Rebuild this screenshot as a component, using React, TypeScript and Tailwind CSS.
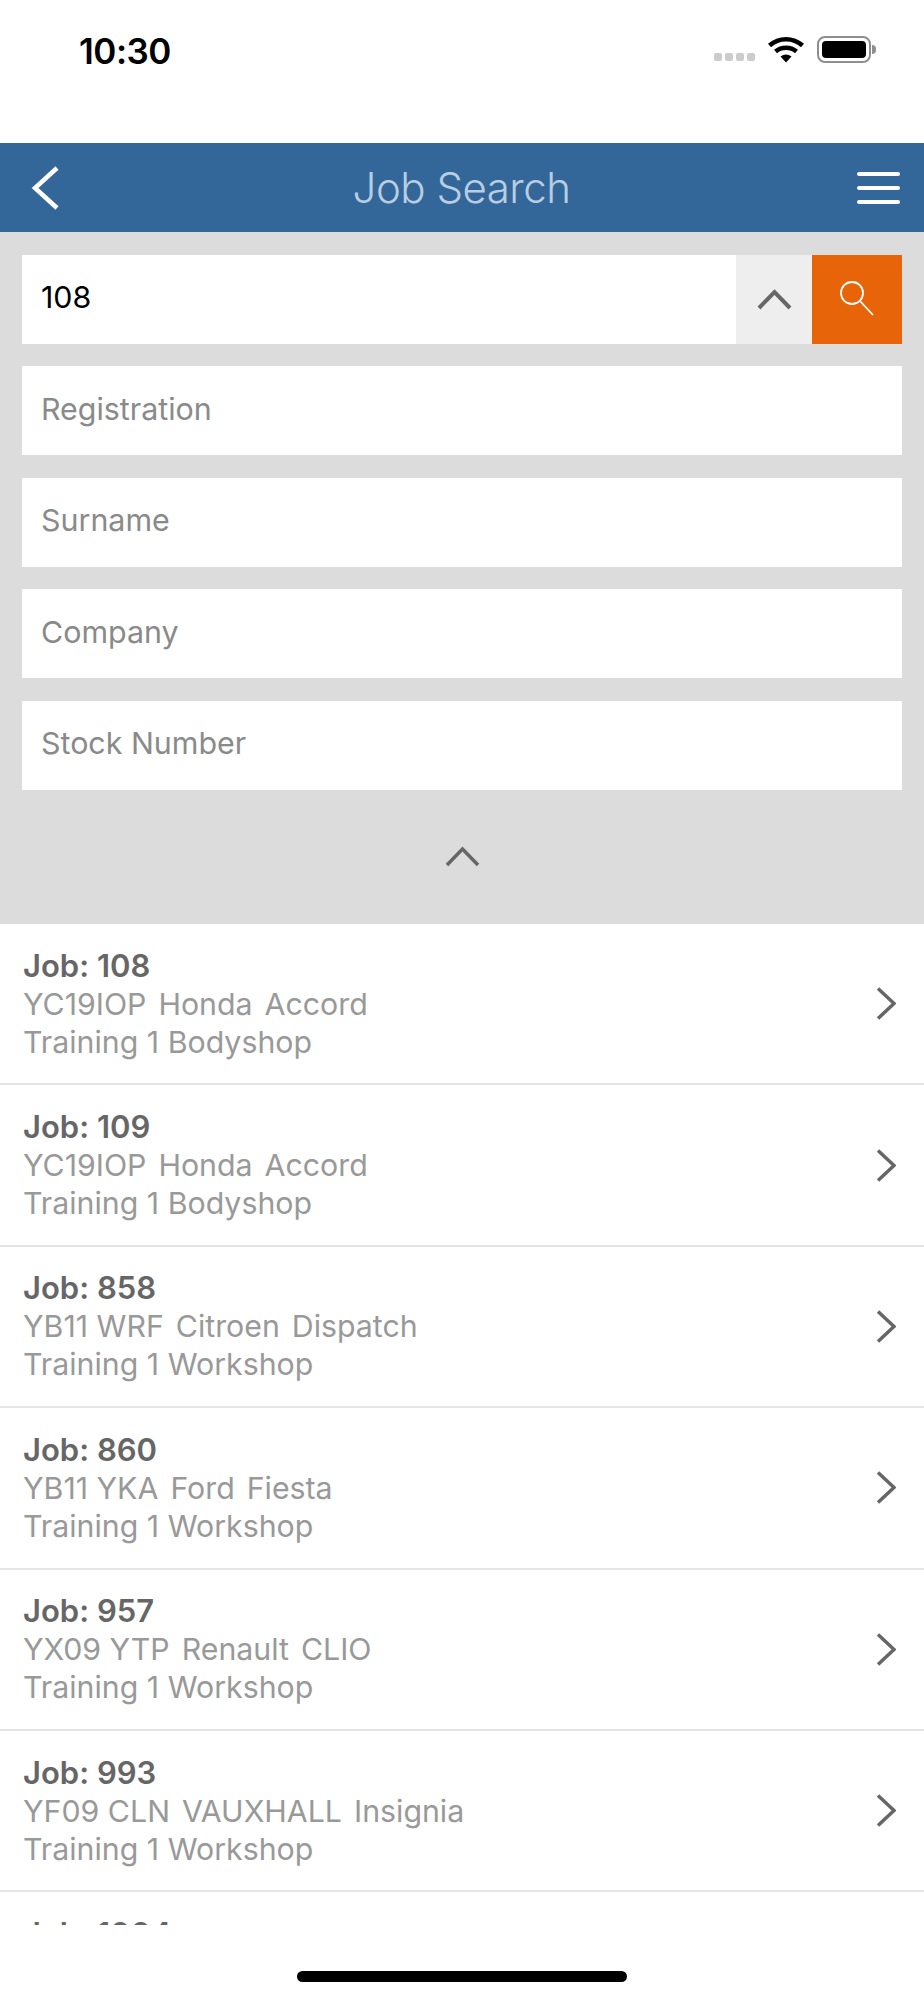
import React from "react";

const FONT = "font-['Inter','Noto_Sans',sans-serif]";

const JOBS = [
  { id: "108", vehicle: ["YC19IOP", "Honda", "Accord"], site: "Training 1 Bodyshop" },
  { id: "109", vehicle: ["YC19IOP", "Honda", "Accord"], site: "Training 1 Bodyshop" },
  { id: "858", vehicle: ["YB11 WRF", "Citroen", "Dispatch"], site: "Training 1 Workshop" },
  { id: "860", vehicle: ["YB11 YKA", "Ford", "Fiesta"], site: "Training 1 Workshop" },
  { id: "957", vehicle: ["YX09 YTP", "Renault", "CLIO"], site: "Training 1 Workshop" },
  { id: "993", vehicle: ["YF09 CLN", "VAUXHALL", "Insignia"], site: "Training 1 Workshop" },
  { id: "1004", vehicle: ["YC19IOP", "Honda", "Accord"], site: "Training 1 Workshop" },
];

function StatusBar() {
  return (
    <div className="flex h-[143px] items-start justify-between bg-white pt-[30px] pl-[79px] pr-[48px]">
      <span className="text-[35px] leading-[42px] font-semibold tracking-[-0.5px] text-black">10:30</span>
      <div className="flex items-center pt-[6px]">
        <div className="mt-[14px] mr-[13px] flex gap-[3px]">
          <span className="h-[8px] w-[8px] rounded-[2px] bg-[#cccccc]" />
          <span className="h-[8px] w-[8px] rounded-[2px] bg-[#cccccc]" />
          <span className="h-[8px] w-[8px] rounded-[2px] bg-[#cccccc]" />
          <span className="h-[8px] w-[8px] rounded-[2px] bg-[#cccccc]" />
        </div>
        <svg width="36" height="27" viewBox="0 0 36 27" className="mr-[13px]">
          <path d="M1.5 9.5C11 1 25 1 34.5 9.5" fill="none" stroke="#000" strokeWidth="4.5" />
          <path d="M7.5 15.5C13.5 10.5 22.5 10.5 28.5 15.5" fill="none" stroke="#000" strokeWidth="4.5" />
          <path d="M12.5 20.5Q18 16.5 23.5 20.5L18 26.5Z" fill="#000" />
        </svg>
        <div className="flex items-center">
          <div className="h-[27px] w-[54px] rounded-[8px] border-[2px] border-[#8e8e8e] p-[3px]">
            <div className="h-full w-full rounded-[4px] bg-black" />
          </div>
          <span className="ml-[1px] h-[9px] w-[4px] rounded-r-[4px] bg-[#8e8e8e]" />
        </div>
      </div>
    </div>
  );
}

function Header() {
  return (
    <div className="flex h-[89px] items-center bg-[#336799] pr-[24px] pl-[31px]">
      <svg width="28" height="44" viewBox="0 0 28 44">
        <path d="M26 2L4 22L26 42" fill="none" stroke="#fff" strokeWidth="4.5" />
      </svg>
      <h1 className="flex-1 pl-[7px] text-center text-[42px] leading-none font-light tracking-[-0.5px] text-[#b8cde2]">
        Job Search
      </h1>
      <div className="flex w-[43px] flex-col gap-[10px]">
        <span className="h-[4px] rounded-full bg-white" />
        <span className="h-[4px] rounded-full bg-white" />
        <span className="h-[4px] rounded-full bg-white" />
      </div>
    </div>
  );
}

function SearchField({ placeholder }: { placeholder: string }) {
  return (
    <div className="flex h-[89px] items-center bg-white pb-[2px] pl-[19px] text-[30.4px] text-[#8a8a8a]">
      {placeholder}
    </div>
  );
}

function SearchPanel() {
  return (
    <div className="flex h-[692px] flex-col bg-[#dcdcdc] px-[22px] pt-[22.5px]">
      <div className="flex flex-col gap-[22.5px]">
        <div className="flex h-[89px]">
          <div className="flex flex-1 items-center bg-white pb-[2px] pl-[19px] text-[30.4px] text-black">108</div>
          <div className="flex w-[76px] items-center justify-center bg-[#eeeeee]">
            <svg width="35" height="21" viewBox="0 0 35 21">
              <path d="M2 19L17.5 3L33 19" fill="none" stroke="#666" strokeWidth="4" />
            </svg>
          </div>
          <div className="flex w-[90px] items-center justify-center bg-[#e86409]">
            <svg width="36" height="36" viewBox="0 0 36 36">
              <circle cx="13" cy="12" r="11" fill="none" stroke="#fff" strokeWidth="1.8" />
              <path d="M21 20L34 34" fill="none" stroke="#fff" strokeWidth="1.8" />
            </svg>
          </div>
        </div>
        <SearchField placeholder="Registration" />
        <SearchField placeholder="Surname" />
        <SearchField placeholder="Company" />
        <SearchField placeholder="Stock Number" />
      </div>
      <div className="flex flex-1 items-center justify-center">
        <svg width="35" height="21" viewBox="0 0 35 21">
          <path d="M2 19L17.5 3L33 19" fill="none" stroke="#666" strokeWidth="3.5" />
        </svg>
      </div>
    </div>
  );
}

function JobRow({ id, vehicle, site }: { id: string; vehicle: string[]; site: string }) {
  return (
    <div className="flex h-[161.4px] shrink-0 items-center border-b-[2px] border-[#e5e5e5] pr-[28px] pl-[23px]">
      <div className="flex-1 text-[30.3px] leading-[38px] text-[#999999]">
        <div className="text-[31px] font-semibold text-[#666666]">Job: {id}</div>
        <div className="flex gap-[12px]">
          {vehicle.map((part) => (
            <span key={part}>{part}</span>
          ))}
        </div>
        <div>{site}</div>
      </div>
      <svg width="20" height="33" viewBox="0 0 20 33">
        <path d="M2 1.5L18 16.5L2 31.5" fill="none" stroke="#666" strokeWidth="3.5" />
      </svg>
    </div>
  );
}

export default function App() {
  return (
    <div className={`flex h-[2000px] w-[924px] flex-col overflow-hidden bg-white ${FONT}`}>
      <StatusBar />
      <Header />
      <SearchPanel />
      <div className="flex h-[1000.5px] flex-col overflow-hidden">
        {JOBS.map((job) => (
          <JobRow key={job.id} {...job} />
        ))}
      </div>
      <div className="flex flex-1 justify-center pt-[46.5px]">
        <span className="h-[11px] w-[330px] rounded-full bg-black" />
      </div>
    </div>
  );
}
